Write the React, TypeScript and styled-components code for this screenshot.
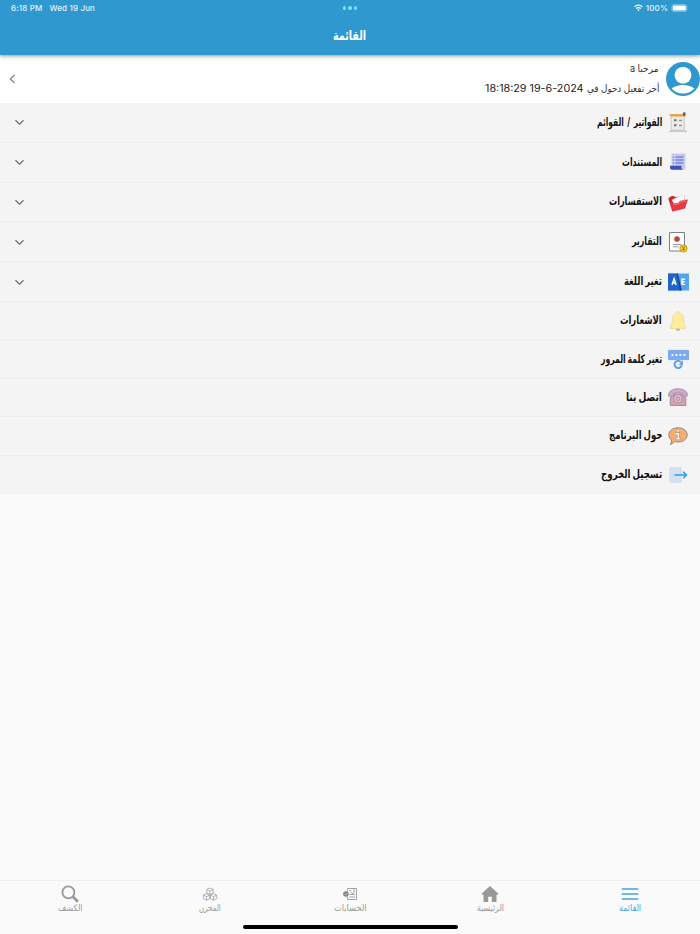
import React, { useLayoutEffect, useRef, useState } from "react";
import styled, { createGlobalStyle } from "styled-components";

const GlobalStyle = createGlobalStyle`
  * { box-sizing: border-box; }
  body { margin: 0; background: #fafafa; font-family: Inter, "DejaVu Sans", sans-serif; }
`;

const Screen = styled.div`
  width: 700px;
  height: 934px;
  display: flex;
  flex-direction: column;
  background: #fafafa;
  overflow: hidden;
`;

const Header = styled.header`
  height: 55px;
  flex: none;
  background: #2e98cf;
  color: #fff;
  box-shadow: 0 1px 4px rgba(0, 0, 0, 0.42);
  z-index: 1;
`;

const StatusBar = styled.div`
  height: 17px;
  display: grid;
  grid-template-columns: 1fr auto 1fr;
  align-items: center;
  padding: 0 11px 1px 11px;
  font-size: 8px;
  font-weight: 500;
  letter-spacing: 0.15px;
  color: #e4f3fb;
`;

const StatusGroup = styled.div<{ $gap: number; $end?: boolean }>`
  display: flex;
  align-items: center;
  gap: ${(p) => p.$gap}px;
  justify-content: ${(p) => (p.$end ? "flex-end" : "flex-start")};
`;

const Dots = styled.div`
  display: flex;
  gap: 1.8px;
  i { width: 3.6px; height: 3.6px; border-radius: 50%; background: #7bdcff; }
`;

const TitleBar = styled.div`
  height: 35px;
  display: flex;
  align-items: center;
  justify-content: center;
`;

const Profile = styled.section`
  height: 48px;
  flex: none;
  display: flex;
  align-items: center;
  justify-content: space-between;
  padding-left: 8px;
  background: #fff;
`;

const ProfileInfo = styled.div`
  display: flex;
  align-items: center;
  gap: 7px;
`;

const ProfileText = styled.div`
  display: flex;
  flex-direction: column;
  align-items: flex-end;
  gap: 4px;
  padding-bottom: 2px;
`;

const LoginLine = styled.div`
  display: flex;
  flex-direction: row-reverse;
  gap: 3px;
`;

const Menu = styled.main`
  flex: none;
  background: #f4f4f4;
`;

const MenuRow = styled.div<{ $tall: boolean }>`
  height: ${(p) => (p.$tall ? 39.8 : 38.4)}px;
  display: flex;
  align-items: center;
  padding: 0 11px 0 13px;
  border-bottom: 1px solid #eeeeee;
  &:last-child { border-bottom: 0; }
`;

const Grow = styled.div`
  flex: 1;
  display: flex;
`;

const IconCell = styled.div`
  width: 22px;
  margin-left: 5px;
  display: flex;
  justify-content: center;
`;

const Lift = styled.div`
  display: flex;
  padding-bottom: 1px;
`;

const TabBar = styled.nav`
  height: 54px;
  flex: none;
  margin-top: auto;
  border-top: 1px solid #efefef;
  display: grid;
  grid-template-columns: repeat(5, 1fr);
  grid-template-rows: 43.5px 5px;
`;

const Tab = styled.div`
  display: flex;
  flex-direction: column;
  align-items: center;
  padding-top: 3px;
  svg { height: 20px; flex: none; }
`;

const TabLabel = styled.div`
  margin-top: -4px;
`;

const HomeIndicator = styled.div`
  grid-column: 1 / -1;
  justify-self: center;
  width: 215px;
  height: 4px;
  border-radius: 2px;
  background: #000;
`;

const TextBox = styled.div<{ $w: number; $size: number; $bold?: boolean; $color: string }>`
  width: ${(p) => p.$w}px;
  height: 16px;
  line-height: 16px;
  direction: rtl;
  white-space: nowrap;
  font-size: ${(p) => p.$size}px;
  font-weight: ${(p) => (p.$bold ? 700 : 400)};
  color: ${(p) => p.$color};
`;

const TextRun = styled.span`
  display: inline-block;
  transform-origin: right center;
`;

type LabelProps = { text: string; w: number; size: number; bold?: boolean; color?: string };

/** Right-to-left label condensed to fill its column width. */
function Label({ text, w, size, bold, color = "#111" }: LabelProps) {
  const ref = useRef<HTMLSpanElement>(null);
  const [scale, setScale] = useState(1);
  useLayoutEffect(() => {
    if (ref.current) setScale(w / ref.current.offsetWidth);
  }, [text, w, size]);
  return (
    <TextBox $w={w} $size={size} $bold={bold} $color={color}>
      <TextRun ref={ref} style={{ transform: `scaleX(${scale})` }}>{text}</TextRun>
    </TextBox>
  );
}

const Chevron = ({ left }: { left?: boolean }) => (
  <svg width={left ? 8 : 13} height="12" viewBox={left ? "0 0 8 12" : "0 0 13 12"} fill="none" stroke={left ? "#858585" : "#6e6e6e"} strokeWidth="1.3">
    <path d={left ? "M6.5 2 2.3 6l4.2 4" : "M2.5 4.2 6.5 8.2l4-4"} />
  </svg>
);

const Avatar = () => (
  <svg width="34" height="34" viewBox="0 0 34 34">
    <circle cx="17" cy="17" r="17" fill="#2e98cf" />
    <circle cx="17" cy="13.3" r="8.4" fill="#fff" />
    <path d="M5.6 26.6Q10 23 17 23t11.4 3.6Q24 31.6 17 31.6T5.6 26.6Z" fill="#fff" />
  </svg>
);

const Invoice = () => (
  <svg width="20" height="22" viewBox="0 0 20 22">
    <path d="M1 20.3h18" stroke="#c9c9c9" strokeWidth="1.6" />
    <path d="M3 3h13.5v16.5H3z" fill="#dedede" stroke="#bdbdbd" strokeWidth=".5" />
    <path d="M4 5h11v13H4z" fill="#ececea" />
    <path d="M1.5 3.2h14l2-1.7v4H3.5l-2-1Z" fill="#ef9b38" />
    <path d="M15 1.5h2.3v3.2h-2Z" fill="#555" />
    <path d="M3 2h10" stroke="#fff" strokeWidth="1" />
    <path d="M6 9.3h2.5M6 14.3h2.5" stroke="#687579" strokeWidth="2" />
    <path d="M11 9.5h3M11 14.5h3" stroke="#8f9698" strokeWidth="1.3" />
  </svg>
);

const Document = () => (
  <svg width="20" height="20" viewBox="0 0 20 20">
    <path d="M3.5 1.5H17.5V15.7q0 2-2 2h-12Z" fill="#c5caf0" />
    <path d="M4.8 5h1M7.5 5h8M4.8 8h1M7.5 8h8M4.8 11h1M7.5 11h8" stroke="#7984d3" strokeWidth="1.3" />
    <path d="M2 13.7h11.5v2q0 2 2 2H4q-2 0-2-2Z" fill="#3f51b5" />
  </svg>
);

const Folder = () => (
  <svg width="20" height="20" viewBox="0 0 20 20">
    <path d="M.8 6Q3 3.5 5.5 4l1.8 1 9.5-1 .5 9L5 18Z" fill="#c82633" />
    <path d="m4 8 9.5-4.9 3 1 .5 6L7 14Z" fill="#f7f7f7" stroke="#ddd" strokeWidth=".5" />
    <path d="M4.5 19.3.6 6.6 4.6 12l5.7-.8 1.7-2 7.5-1.4-2.7 8.4Z" fill="#e93842" stroke="#b91d2c" strokeWidth=".5" />
    <path d="m5 12.8 5.7-.8 1.7-2 6-1.2" fill="none" stroke="#ff8c8d" strokeWidth=".7" />
  </svg>
);

const Report = () => (
  <svg width="20" height="22" viewBox="0 0 20 22">
    <path d="M1.5 1.5h15v18.5h-15z" fill="#fff" stroke="#7d8487" strokeWidth="1" />
    <circle cx="9" cy="8" r="2.6" fill="#a9504a" stroke="#d84a41" strokeWidth="1" strokeDasharray="1 .5" />
    <path d="M5 13.5h8M5 15.8h6" stroke="#999" />
    <circle cx="15.5" cy="17.4" r="3.7" fill="#f4ca28" stroke="#9b7d15" strokeWidth=".6" />
    <path d="m14 15.5 1.5 1.8 1.5-1.8m-1.5 1.8v2.2m-1.2-1h2.4" fill="none" stroke="#68571e" strokeWidth=".7" />
  </svg>
);

const Language = () => (
  <svg width="21" height="18" viewBox="0 0 21 18">
    <path d="M0 .5h21v17H0z" fill="#50a5ed" />
    <path d="M0 .5h9.3l3.3 17H0z" fill="#2166c7" />
    <path d="M8.8.5h1.2l3.8 17h-2Z" fill="#1743a0" />
    <path d="m4 12 2.1-6.3L8.2 12M4.8 10h2.6M17 6.2h-3v5.2h3M14 8.8h2.6" fill="none" stroke="#fff" strokeWidth="1.4" />
  </svg>
);

const Bell = () => (
  <svg width="18" height="22" viewBox="0 0 18 22">
    <path d="M9 1.3c1 0 1.6.7 1.6 1.7C14 4 14.8 7 14.8 10c0 4 .7 5.5 2.2 7.2v1.2H1v-1.2C2.5 15.5 3.2 14 3.2 10c0-3 .8-6 4.2-7 0-1 .6-1.7 1.6-1.7Z" fill="#ffec9c" stroke="#e7d9a5" strokeWidth=".8" />
    <path d="M6.7 18.8h4.6Q11 21 9 21t-2.3-2.2Z" fill="#d8b875" />
  </svg>
);

const Password = () => (
  <svg width="21" height="21" viewBox="0 0 21 21">
    <path d="M.5 1.4h20v9.2H.5z" fill="#79acf1" stroke="#6f9fe0" strokeWidth=".8" />
    <path d="M3.5 6h1.8M7.5 6h1.8M11.5 6h1.8M15.5 6h1.8" stroke="#fff" strokeWidth="1.8" />
    <path d="M12.8 13a3.6 3.6 0 1 0 .9 3.2" fill="none" stroke="#5c9ce2" strokeWidth="1.9" />
    <path d="M15 11.3v4.5h-4.3Z" fill="#5c9ce2" />
  </svg>
);

const Phone = () => (
  <svg width="20" height="20" viewBox="0 0 20 20">
    <path d="M4.8 7h10.4l2.6 4.5v7H2.2v-7Z" fill="#d2a0b0" stroke="#9d7994" strokeWidth=".8" />
    <path d="M.7 6.3C3 .2 17 .2 19.3 6.3v3h-4.5L14 6H6L5.2 9.3H.7Z" fill="#cdabc8" stroke="#a58ba4" strokeWidth=".8" />
    <circle cx="10" cy="11.6" r="4" fill="#ead6df" stroke="#a58298" strokeWidth=".8" />
    <circle cx="10" cy="11.6" r="2.1" fill="#d8b3c1" stroke="#aa7a95" strokeWidth=".7" />
  </svg>
);

const About = () => (
  <svg width="20" height="20" viewBox="0 0 20 20">
    <path d="M10 1.8c5.3 0 9.2 3 9.2 7.1S15.3 16 10 16c-1.6 0-2.5-.2-3.6-.5Q4.7 18 2.2 18.5q1.5-2 1.4-4.4C1.8 13 .8 11.2.8 8.9.8 4.8 4.7 1.8 10 1.8Z" fill="#f5ad70" stroke="#858582" strokeWidth=".9" />
    <path d="M8 7.8h2.4v5M7.7 12.8h4.8" fill="none" stroke="#8b7560" strokeWidth="2.4" />
    <path d="M8 7.8h2.4v5M7.9 12.8h4.4" fill="none" stroke="#fff" strokeWidth="1.6" />
    <circle cx="10" cy="4.9" r="1.3" fill="#fff" stroke="#777" strokeWidth=".4" />
  </svg>
);

const Logout = () => (
  <svg width="20" height="20" viewBox="0 0 20 20">
    <rect x="1" y="2" width="13" height="16" rx="2" fill="#d5e0f2" />
    <path d="M6.5 10h12m-3.3-3.2 3.2 3.2-3.2 3.2" fill="none" stroke="#2499f4" strokeWidth="1.5" />
  </svg>
);

const SearchIcon = () => (
  <svg width="20" viewBox="0 0 20 20" fill="none" stroke="#999">
    <circle cx="8.4" cy="8.3" r="6" strokeWidth="1.8" />
    <path d="m12.7 12.5 5.2 5.2" strokeWidth="2.7" />
  </svg>
);

const cube = "m0-3 3.2 1.4v3.6L0 3.5-3.2 2v-3.6Zm-3.2 1.4L0 0l3.2-1.6M0 0v3.5";
const StoreIcon = () => (
  <svg width="18" viewBox="0 0 18 20" fill="none" stroke="#a2a2a2" strokeWidth=".8">
    {[[9, 7], [5.5, 12.7], [12.5, 12.7]].map(([x, y]) => (
      <path key={x} transform={`translate(${x} ${y})`} d={cube} />
    ))}
  </svg>
);

const AccountsIcon = () => (
  <svg width="16" viewBox="0 0 16 20" fill="none" stroke="#999">
    <path d="M5.5 8V4.5h9v11h-9v-3" strokeWidth=".9" />
    <path d="M7.3 6.5h2M11 6h2M11 8h2M8.5 8l3.5 2.5M7.5 10.5h5.5M7.5 13h5.5" strokeWidth=".9" />
    <circle cx="3.9" cy="10" r="2.8" fill="#858585" stroke="none" />
    <path d="m2.8 10 1 1 1.7-2" stroke="#ddd" strokeWidth=".6" />
  </svg>
);

const HomeIcon = () => (
  <svg width="18" viewBox="0 0 18 20" fill="#999">
    <path d="m9 2 8.5 7.7-1 1.1h-1V18h-4.7v-5.2H7.2V18H2.5v-7.2h-1l-1-1.1Z" />
  </svg>
);

const MenuIcon = () => (
  <svg width="18" viewBox="0 0 18 20" stroke="#43a7dc" strokeWidth="1.7">
    <path d="M.8 5h16.5M.8 10h16.5M.8 15h16.5" />
  </svg>
);

const rows: [string, number, () => React.ReactElement, boolean][] = [
  ["الفواتير\u00a0 /\u00a0 القوائم", 65, Invoice, true],
  ["المستندات", 40, Document, true],
  ["الاستفسارات", 53, Folder, true],
  ["التقارير", 30, Report, true],
  ["تغير اللغة", 38, Language, true],
  ["الاشعارات", 42, Bell, false],
  ["تغير كلمة المرور", 61, Password, false],
  ["اتصل بنا", 36, Phone, false],
  ["حول البرنامج", 53, About, false],
  ["تسجيل الخروج", 61, Logout, false],
];

const tabs: [string, number, () => React.ReactElement][] = [
  ["الكشف", 25, SearchIcon],
  ["المخزن", 22, StoreIcon],
  ["الحسابات", 33, AccountsIcon],
  ["الرئيسية", 27, HomeIcon],
  ["القائمة", 22, MenuIcon],
];

export default function App() {
  return (
    <>
      <GlobalStyle />
      <Screen>
        <Header>
          <StatusBar>
            <StatusGroup $gap={7}><span>6:18 PM</span><span>Wed 19 Jun</span></StatusGroup>
            <Dots><i /><i /><i /></Dots>
            <StatusGroup $gap={3} $end>
              <svg width="9" height="8" viewBox="0 0 9 8" fill="none" stroke="#fff" strokeWidth="1.3">
                <path d="M.6 2.7q3.9-3.2 7.8 0M2.1 4.5q2.4-1.9 4.8 0" />
                <path d="m3.3 5.7 1.2 1.5 1.2-1.5q-1.2-.8-2.4 0Z" fill="#fff" stroke="none" />
              </svg>
              <span>100%</span>
              <svg width="18" height="8" viewBox="0 0 18 8">
                <rect x=".8" y=".5" width="15" height="7" rx="2" fill="none" stroke="#96cce7" strokeWidth=".7" />
                <rect x="1.7" y="1.4" width="13.2" height="5.2" rx="1.2" fill="#fff" />
                <path d="M16.7 2.8q1 1.2 0 2.4Z" fill="#96cce7" />
              </svg>
            </StatusGroup>
          </StatusBar>
          <TitleBar><Label text="القائمة" w={33} size={13} bold color="#fff" /></TitleBar>
        </Header>
        <Profile>
          <Chevron left />
          <ProfileInfo>
            <ProfileText>
              <Label text="مرحبا a" w={29} size={10} color="#333" />
              <LoginLine>
                <Label text="أخر تفعيل دخول في" w={72} size={10} color="#333" />
                <Label text="19-6-2024 18:18:29" w={99} size={10} color="#222" />
              </LoginLine>
            </ProfileText>
            <Avatar />
          </ProfileInfo>
        </Profile>
        <Menu>
          {rows.map(([text, w, Icon, tall]) => (
            <MenuRow key={text} $tall={tall}>
              <Grow>{tall && <Chevron />}</Grow>
              <Lift><Label text={text} w={w} size={11.5} bold /></Lift>
              <IconCell><Icon /></IconCell>
            </MenuRow>
          ))}
        </Menu>
        <TabBar>
          {tabs.map(([text, w, Icon], i) => (
            <Tab key={text}>
              <Icon />
              <TabLabel><Label text={text} w={w} size={9} color={i === 4 ? "#43a7dc" : "#999"} /></TabLabel>
            </Tab>
          ))}
          <HomeIndicator />
        </TabBar>
      </Screen>
    </>
  );
}
